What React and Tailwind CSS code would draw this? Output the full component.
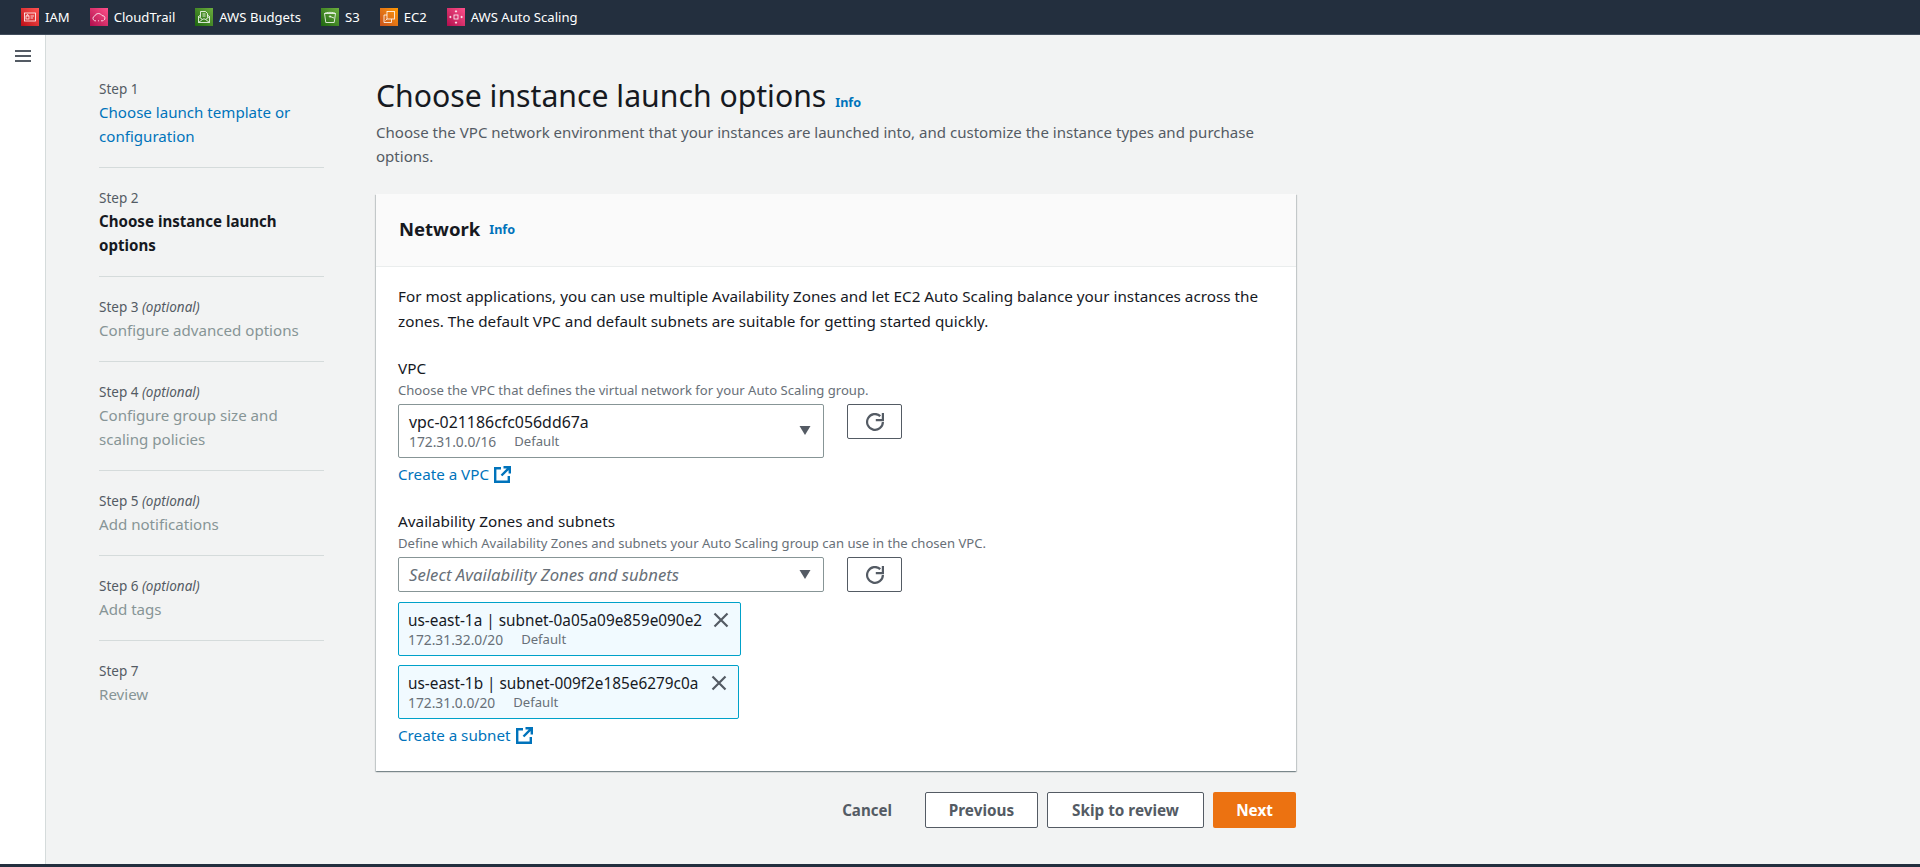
import React from 'react';

const NAV_ITEMS = [
  { label: 'IAM', bg: 'from-[#bd0816] to-[#ff5252]', icon: 'iam' },
  { label: 'CloudTrail', bg: 'from-[#b0084d] to-[#ff4f8b]', icon: 'cloud' },
  { label: 'AWS Budgets', bg: 'from-[#1b660f] to-[#6cae3e]', icon: 'budget' },
  { label: 'S3', bg: 'from-[#1b660f] to-[#6cae3e]', icon: 's3' },
  { label: 'EC2', bg: 'from-[#c8511b] to-[#ff9900]', icon: 'ec2' },
  { label: 'AWS Auto Scaling', bg: 'from-[#b0084d] to-[#ff4f8b]', icon: 'scale' },
];

const STEPS = [
  { step: 'Step 1', title: ['Choose launch template or', 'configuration'], state: 'link' },
  { step: 'Step 2', title: ['Choose instance launch', 'options'], state: 'active' },
  { step: 'Step 3', optional: true, title: ['Configure advanced options'] },
  { step: 'Step 4', optional: true, title: ['Configure group size and', 'scaling policies'] },
  { step: 'Step 5', optional: true, title: ['Add notifications'] },
  { step: 'Step 6', optional: true, title: ['Add tags'] },
  { step: 'Step 7', title: ['Review'] },
];

const NavGlyph = ({ name }) => {
  const common = { fill: 'none', stroke: 'white', strokeWidth: 0.8 };
  return (
    <svg width="18" height="18" viewBox="0 0 18 18" {...common}>
      {name === 'iam' && (
        <>
          <rect x="3.5" y="5" width="11" height="8" />
          <rect x="5" y="8" width="3" height="3" />
          <path d="M5.8 8V7.2a.7.7 0 0 1 1.4 0V8M9.5 8h3.5M9.5 10h2.5" />
        </>
      )}
      {name === 'cloud' && (
        <>
          <path d="M4.5 12.5a2.3 2.3 0 0 1 .2-4.4A4 4 0 0 1 12 7.6a2.6 2.6 0 0 1 1.5 4.9" />
          <path d="M4.5 12.8h1.5M8 12.8h1M11 12.8h2" />
        </>
      )}
      {name === 'budget' && (
        <>
          <path d="M3.5 8.5v6h11v-6l-2-1.500M3.500 8.500l2-1.500M3.500 14.500l4.500-3.500h2l4.500 3.500M3.500 8.500l3.500 2.700M14.500 8.500l-3.500 2.700" />
          <path d="M5.500 9.500V3.500h5l2 2v4M7.500 6h3M7.500 8h3" />
        </>
      )}
      {name === 's3' && (
        <>
          <path d="M3.500 5.500h11l-1.300 9H4.800z" />
          <path d="M3.500 5.500c1-1.500 10-1.500 11 0" />
          <path d="M9 8.500l4 1.500" />
          <circle cx="9" cy="8.500" r="0.700" />
        </>
      )}
      {name === 'ec2' && (
        <>
          <rect x="7" y="3.500" width="7.500" height="7.500" />
          <path d="M7 7H4v7.500h7.500V11" />
          <path d="M5.500 12.500l1.500-1.500" />
        </>
      )}
      {name === 'scale' && (
        <>
          <rect x="7" y="7" width="4" height="4" />
          <path d="M9 2.500v2M9 13.500v2M2.500 9h2M13.500 9h2" />
          <path d="M8 4l1-1.300L10 4M8 14l1 1.300L10 14M4 8l-1.300 1L4 10M14 8l1.300 1L14 10" />
        </>
      )}
    </svg>
  );
};

const NavItem = ({ item }) => (
  <div className="flex items-center gap-[6px]">
    <div className={`w-[18px] h-[18px] bg-gradient-to-tr ${item.bg}`}>
      <NavGlyph name={item.icon} />
    </div>
    <span className="text-[13.100px] text-white leading-[18px]">{item.label}</span>
  </div>
);

const Step = ({ data, last }) => (
  <li className={`pb-[19px] ${last ? '' : 'mb-[20px] border-b border-[#d5dbdb]'}`}>
    <div className="text-[13.500px] leading-[20px] text-[#545b64]">
      {data.step}
      {data.optional && <i> (optional)</i>}
    </div>
    <div
      className={`mt-[1px] text-[15.100px] leading-[24px] ${
        data.state === 'link'
          ? 'text-[#0073bb]'
          : data.state === 'active'
          ? 'text-[14.600px] font-bold text-[#16191f]'
          : 'text-[#879596]'
      }`}
    >
      {data.title.map((t) => (
        <div key={t}>{t}</div>
      ))}
    </div>
  </li>
);

const ExternalIcon = () => (
  <svg width="17" height="17" viewBox="0 0 17 17" fill="none" stroke="#0073bb" strokeWidth="2.400" className="ml-[5px]">
    <path d="M7 2.200H1.200v13.600H14.800V10" />
    <path d="M9.500 1.200H15.800V7.500M15.300 1.700L7.500 9.500" />
  </svg>
);

const RefreshIcon = () => (
  <svg width="18" height="18" viewBox="0 0 18 18" fill="none" stroke="#545b64" strokeWidth="2.200">
    <path d="M16.900 9a7.900 7.900 0 1 1-2.600-5.900" />
    <path d="M16.900 0v7.200H9.800" />
  </svg>
);

const Caret = () => (
  <svg width="12" height="9" viewBox="0 0 12 9" className="shrink-0">
    <path d="M0.500 0h11L6 9z" fill="#545b64" />
  </svg>
);

const CloseIcon = () => (
  <svg width="16" height="16" viewBox="0 0 16 16" fill="none" stroke="#545b64" strokeWidth="2.200" className="shrink-0">
    <path d="M1.500 1.500l13 13M14.500 1.500l-13 13" />
  </svg>
);

const RefreshButton = () => (
  <button className="w-[55px] h-[35px] flex items-center justify-center bg-white border border-[#545b64] rounded-[2px]">
    <RefreshIcon />
  </button>
);

const Token = ({ name, cidr, width }) => (
  <div className={`${width} h-[54px] flex items-start justify-between bg-[#f1faff] border border-[#00a1c9] rounded-[2px] pl-[9px] pr-[11px] pt-[6px]`}>
    <div>
      <div className="text-[15.350px] leading-[22px] text-[#16191f] whitespace-nowrap">{name}</div>
      <div className="text-[13.100px] leading-[17px] text-[#687078] flex gap-[18px]">
        <span className="text-[13.800px]">{cidr}</span>
        <span>Default</span>
      </div>
    </div>
    <div className="mt-[3px]">
      <CloseIcon />
    </div>
  </div>
);

export default function App() {
  return (
    <div className="h-screen flex flex-col overflow-hidden bg-[#f2f3f3] font-['Noto_Sans','Open_Sans',sans-serif] text-[#16191f]">
      {/* top service bar */}
      <div className="h-[35px] shrink-0 bg-[#232f3e] border-b border-[#414d5c] flex items-center gap-[20px] pl-[21px]">
        {NAV_ITEMS.map((item) => (
          <NavItem key={item.label} item={item} />
        ))}
      </div>

      <div className="flex-1 flex min-h-0">
        {/* collapsed side rail */}
        <div className="w-[46px] shrink-0 bg-white border-r border-[#d5dbdb] pt-[15px] pl-[15px]">
          <div className="w-[16px] flex flex-col gap-[3px]">
            <div className="h-[2px] bg-[#545b64]" />
            <div className="h-[2px] bg-[#545b64]" />
            <div className="h-[2px] bg-[#545b64]" />
          </div>
        </div>

        {/* wizard steps */}
        <ol className="w-[225px] shrink-0 ml-[53px] mt-[44px]">
          {STEPS.map((s, i) => (
            <Step key={s.step} data={s} last={i === STEPS.length - 1} />
          ))}
        </ol>

        <main className="w-[920px] shrink-0 ml-[52px] mt-[43px]">
          <div className="flex items-baseline gap-[9px]">
            <h1 className="text-[30.200px] leading-[36px] font-normal text-[#16191f]">Choose instance launch options</h1>
            <span className="text-[12.600px] font-bold text-[#0073bb]">Info</span>
          </div>
          <p className="text-[15.050px] leading-[24px] text-[#545b64] mt-[6px] w-[900px]">
            Choose the VPC network environment that your instances are launched into, and customize the instance types and purchase options.
          </p>

          <section className="mt-[26px] bg-white shadow-[0_1px_1px_0_rgba(0,28,36,0.3),1px_1px_1px_0_rgba(0,28,36,0.15),-1px_1px_1px_0_rgba(0,28,36,0.15)]">
            <div className="h-[73px] bg-[#fafafa] border-b border-[#eaeded] flex items-center gap-[9px] px-[23px] pb-[2px]">
              <h2 className="text-[18.500px] font-bold leading-[22px]">Network</h2>
              <span className="text-[12.600px] font-bold text-[#0073bb] mt-[2px]">Info</span>
            </div>

            <div className="px-[22px] pt-[17px] pb-[24px] h-[504px]">
              <p className="text-[15.250px] leading-[25px] text-[#16191f]">
                For most applications, you can use multiple Availability Zones and let EC2 Auto Scaling balance your instances across the zones. The default VPC and default subnets are suitable for getting started quickly.
              </p>

              <div className="mt-[23px] text-[15.300px] leading-[22px]">VPC</div>
              <div className="text-[13.100px] leading-[16px] text-[#687078] mt-[3px]">Choose the VPC that defines the virtual network for your Auto Scaling group.</div>
              <div className="flex items-start gap-[23px] mt-[6px]">
                <div className="w-[426px] h-[54px] bg-white border border-[#879596] rounded-[2px] flex items-center justify-between pl-[10px] pr-[12px] pb-[2px]">
                  <div>
                    <div className="text-[15.900px] leading-[22px]">vpc-021186cfc056dd67a</div>
                    <div className="text-[13.100px] leading-[17px] text-[#687078] flex gap-[18px]">
                      <span className="text-[13.800px]">172.31.0.0/16</span>
                      <span>Default</span>
                    </div>
                  </div>
                  <Caret />
                </div>
                <RefreshButton />
              </div>
              <a className="flex items-center mt-[5px] text-[15.200px] leading-[22px] text-[#0073bb]">
                Create a VPC
                <ExternalIcon />
              </a>

              <div className="mt-[25px] text-[15.300px] leading-[22px]">Availability Zones and subnets</div>
              <div className="text-[13.100px] leading-[16px] text-[#687078] mt-[3px]">Define which Availability Zones and subnets your Auto Scaling group can use in the chosen VPC.</div>
              <div className="flex items-start gap-[23px] mt-[6px]">
                <div className="w-[426px] h-[35px] bg-white border border-[#879596] rounded-[2px] flex items-center justify-between pl-[10px] pr-[12px]">
                  <span className="text-[16.700px] italic text-[#687078]">Select Availability Zones and subnets</span>
                  <Caret />
                </div>
                <RefreshButton />
              </div>

              <div className="flex flex-col gap-[9px] mt-[10px]">
                <Token name="us-east-1a | subnet-0a05a09e859e090e2" cidr="172.31.32.0/20" width="w-[343px]" />
                <Token name="us-east-1b | subnet-009f2e185e6279c0a" cidr="172.31.0.0/20" width="w-[341px]" />
              </div>
              <a className="flex items-center mt-[5px] text-[15.200px] leading-[22px] text-[#0073bb]">
                Create a subnet
                <ExternalIcon />
              </a>
            </div>
          </section>

          <div className="flex items-center justify-end mt-[21px]">
            <span className="text-[15.100px] font-bold text-[#545b64] mr-[33px]">Cancel</span>
            <button className="w-[113px] h-[36px] bg-white border border-[#545b64] rounded-[2px] text-[15.300px] font-bold text-[#545b64] mr-[9px]">Previous</button>
            <button className="w-[157px] h-[36px] bg-white border border-[#545b64] rounded-[2px] text-[15.300px] font-bold text-[#545b64] mr-[9px]">Skip to review</button>
            <button className="w-[83px] h-[36px] bg-[#ec7211] rounded-[2px] text-[15.300px] font-bold text-white">Next</button>
          </div>
        </main>
      </div>

      <div className="h-[3px] shrink-0 bg-[#232f3e]" />
    </div>
  );
}
